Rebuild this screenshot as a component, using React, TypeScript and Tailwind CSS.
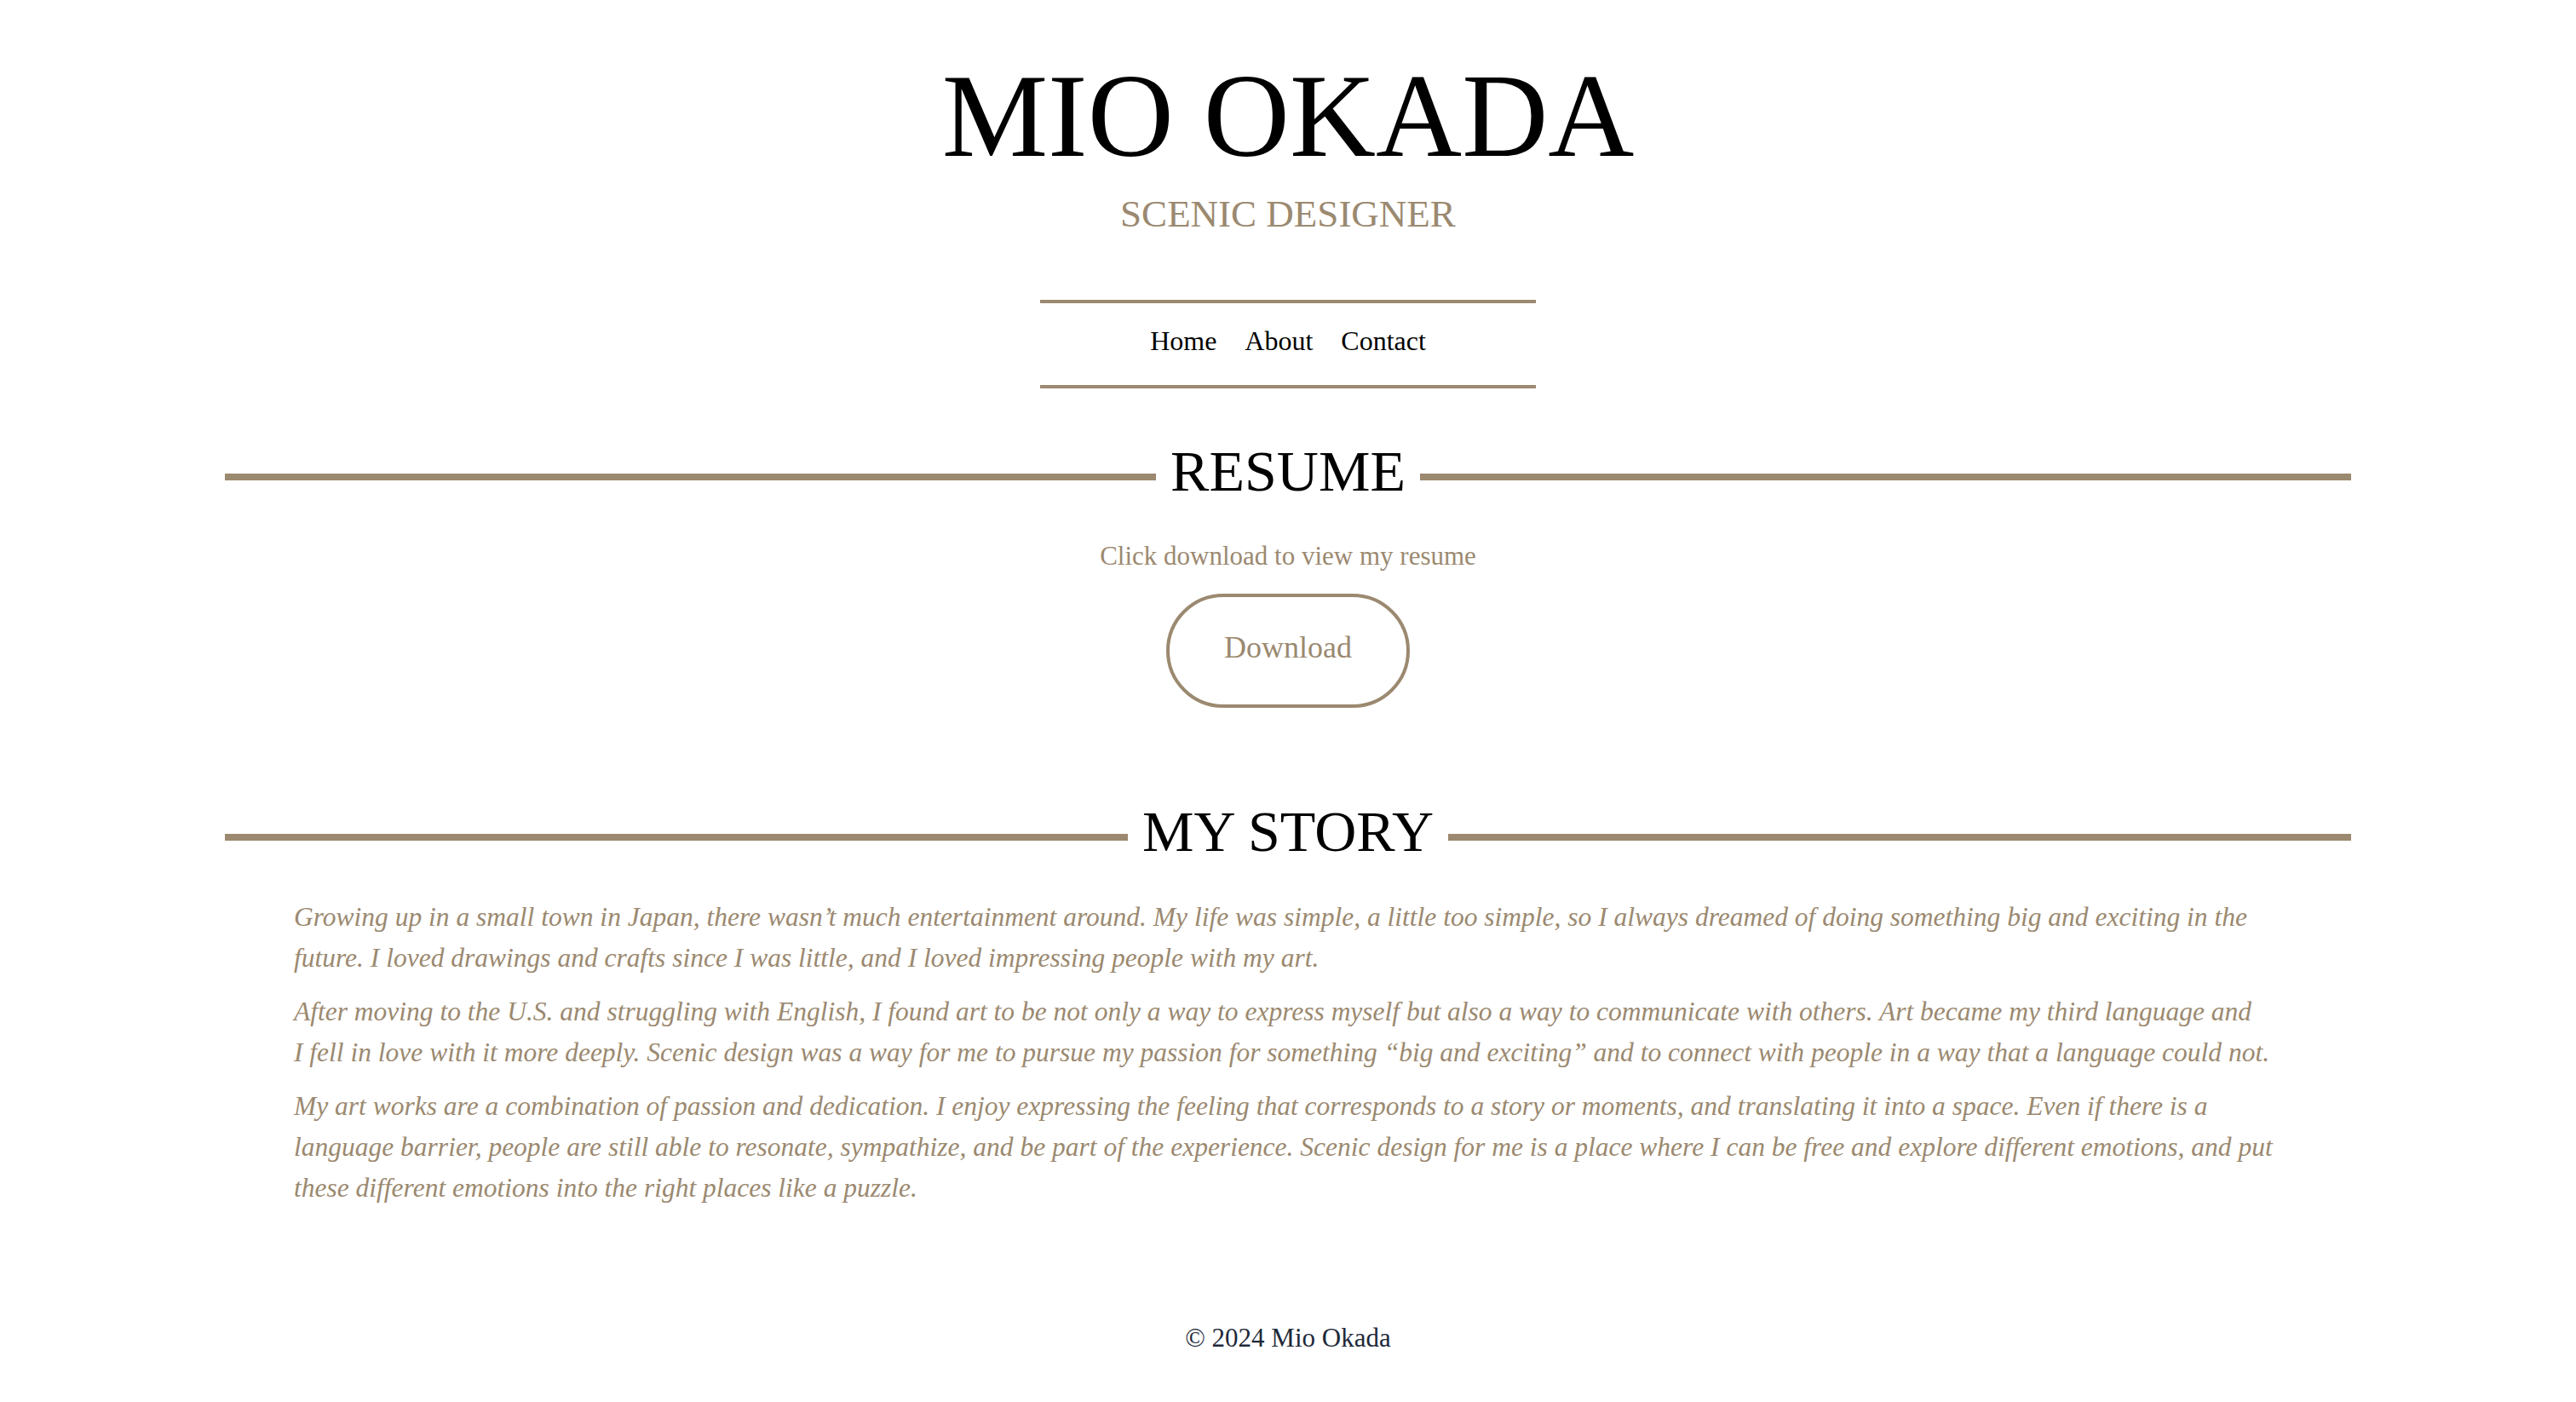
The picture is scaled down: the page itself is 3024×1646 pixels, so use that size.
const tan = 'text-[#9b8970]';

function SectionTitle({ title }: { title: string }) {
  return (
    <div className="flex items-center gap-[17px]">
      <div className="flex-1 h-[8px] mt-[14px] bg-[#9b8970]" />
      <h2 className="text-[68px] leading-none text-black">{title}</h2>
      <div className="flex-1 h-[8px] mt-[14px] bg-[#9b8970]" />
    </div>
  );
}

const story = [
  'Growing up in a small town in Japan, there wasn\u2019t much entertainment around. My life was simple, a little too simple, so I always dreamed of doing something big and exciting in the future. I loved drawings and crafts since I was little, and I loved impressing people with my art.',
  'After moving to the U.S. and struggling with English, I found art to be not only a way to express myself but also a way to communicate with others. Art became my third language and I\u00a0fell in love with it more deeply. Scenic design was a way for me to pursue my passion for something \u201cbig and exciting\u201d and to connect with people in a way that a language could not.',
  'My art works are a combination of passion and dedication. I enjoy expressing the feeling that corresponds to a story or moments, and translating it into a space. Even if there is a language barrier, people are still able to resonate, sympathize, and be part of the experience. Scenic design for me is a place where I can be free and explore different emotions, and put these different emotions into the right places like a puzzle.',
];

export default function App() {
  return (
    <div className="min-h-[1646px] bg-white font-['Liberation_Serif',serif] flex flex-col items-center">
      <header className="pt-[66px] flex flex-col items-center">
        <h1 className="text-[140px] leading-none text-black">MIO OKADA</h1>
        <p className={`mt-[23px] text-[45px] leading-none ${tan}`}>SCENIC DESIGNER</p>
      </header>

      <nav className="mt-[78px] w-[582px] border-y-4 border-[#9b8970] pt-[20px] pb-[28px] flex justify-center gap-[33px] text-[32px] leading-[48px] text-black">
        <a href="#">Home</a>
        <a href="#">About</a>
        <a href="#">Contact</a>
      </nav>

      <main className="w-full px-[264px]">
        <section className="mt-[63px]">
          <SectionTitle title="RESUME" />
          <div className="flex flex-col items-center">
            <p className={`mt-[50px] text-[31px] leading-none ${tan}`}>Click download to view my resume</p>
            <button className={`mt-[29px] rounded-full border-4 border-[#9b8970] px-[64px] pt-[41px] pb-[49px] text-[36px] leading-none ${tan}`}>
              Download
            </button>
          </div>
        </section>

        <section className="mt-[111px]">
          <SectionTitle title="MY STORY" />
          <div className="mt-[43px] pl-[81px] pr-[70px] flex flex-col gap-[15px]">
            {story.map((p, i) => (
              <p key={i} className={`italic text-[31.5px] leading-[48px] ${tan}`}>{p}</p>
            ))}
          </div>
        </section>
      </main>

      <footer className="mt-[136px] text-[31px] leading-none text-gray-800">© 2024 Mio Okada</footer>
    </div>
  );
}
